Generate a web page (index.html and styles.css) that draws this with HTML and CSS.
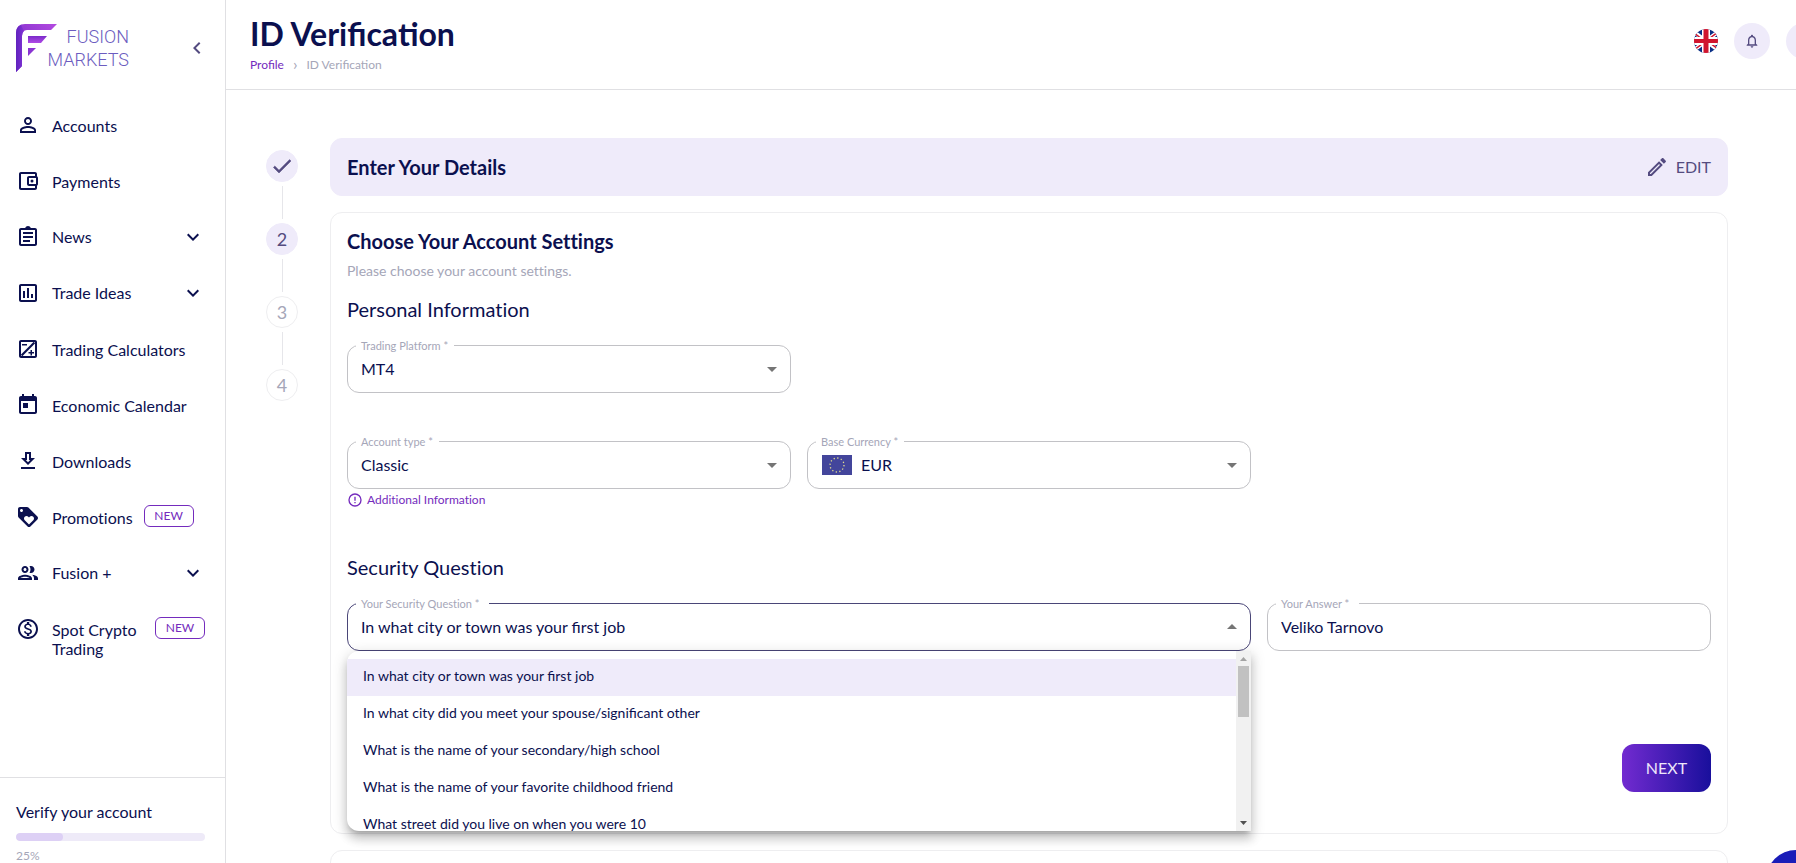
FILE: index.html
```html
<!DOCTYPE html>
<html lang="en">
<head>
<meta charset="utf-8">
<title>ID Verification</title>
<link rel="stylesheet" href="styles.css">
</head>
<body>
<div class="app">
  <aside class="sidebar">
    <div class="brand">
      <svg class="logo" width="114" height="48" viewBox="0 0 114 48" role="img" aria-label="Fusion Markets">
        <defs>
          <linearGradient id="lg" x1="0" y1="1" x2="1" y2="0"><stop offset="0" stop-color="#6a25c4"/><stop offset="1" stop-color="#b44ae0"/></linearGradient>
          <linearGradient id="lv" x1="0" y1="0" x2="1" y2="0"><stop offset="0" stop-color="#5f22bd"/><stop offset="1" stop-color="#8334d6"/></linearGradient>
          <linearGradient id="lh" x1="0" y1="0" x2="0" y2="1"><stop offset="0" stop-color="#7a2bc9"/><stop offset="1" stop-color="#b04ae6"/></linearGradient>
        </defs>
        <path fill="url(#lg)" d="M0 9Q0 0 9 0H41L35 6H11Q6 6 6 12V42L0 48Z"/>
        <path fill="url(#lv)" d="M0 9Q0 3 5 1L8 7Q6 9 6 12V42L0 48Z"/>
        <path fill="url(#lh)" d="M12 12H31L25 19H12Z"/>
        <path fill="#8a35d2" d="M12 24H20L12 32Z"/>
        <text class="logo-text" x="113" y="19" text-anchor="end">FUSION</text>
        <text class="logo-text" x="113" y="42" text-anchor="end">MARKETS</text>
      </svg>
      <button class="collapse" aria-label="Collapse menu"><svg class="icon" viewBox="0 0 24 24"><path d="M15.41 7.41 14 6l-6 6 6 6 1.41-1.41L10.83 12z"/></svg></button>
    </div>
    <nav class="nav">
      <a class="item" href="#"><svg class="icon" viewBox="0 0 24 24"><path d="M12 5.9c1.16 0 2.1.94 2.1 2.1s-.94 2.1-2.1 2.1S9.9 9.16 9.9 8s.94-2.1 2.1-2.1m0 9c2.97 0 6.1 1.46 6.1 2.1v1.1H5.9V17c0-.64 3.13-2.1 6.1-2.1M12 4C9.79 4 8 5.79 8 8s1.79 4 4 4 4-1.79 4-4-1.79-4-4-4m0 9c-2.67 0-8 1.34-8 4v3h16v-3c0-2.66-5.33-4-8-4"/></svg><span class="text">Accounts</span></a>
      <a class="item" href="#"><svg class="icon" viewBox="0 0 24 24"><path d="M21 7.28V5c0-1.1-.9-2-2-2H5c-1.11 0-2 .9-2 2v14c0 1.1.89 2 2 2h14c1.1 0 2-.9 2-2v-2.28c.59-.35 1-.98 1-1.72V9c0-.74-.41-1.37-1-1.72M20 9v6h-7V9zM5 19V5h14v2h-6c-1.1 0-2 .9-2 2v6c0 1.1.9 2 2 2h6v2z"/><circle cx="16" cy="12" r="1.5"/></svg><span class="text">Payments</span></a>
      <a class="item expandable" href="#"><svg class="icon" viewBox="0 0 24 24"><path d="M7 15h7v2H7zm0-4h10v2H7zm0-4h10v2H7z"/><path fill-rule="evenodd" d="M19 3h-4.18C14.4 1.84 13.3 1 12 1s-2.4.84-2.82 2H5c-1.1 0-2 .9-2 2v14c0 1.1.9 2 2 2h14c1.1 0 2-.9 2-2V5c0-1.1-.9-2-2-2zm0 16H5V5h14z"/></svg><span class="text">News</span><svg class="icon" viewBox="0 0 24 24"><path d="M16.59 8.59 12 13.17 7.41 8.59 6 10l6 6 6-6z"/></svg></a>
      <a class="item expandable" href="#"><svg class="icon" viewBox="0 0 24 24"><path fill-rule="evenodd" d="M9 17H7v-7h2zm4 0h-2V7h2zm4 0h-2v-4h2zm2 2H5V5h14zm0-16H5c-1.1 0-2 .9-2 2v14c0 1.1.9 2 2 2h14c1.1 0 2-.9 2-2V5c0-1.1-.9-2-2-2z"/></svg><span class="text">Trade Ideas</span><svg class="icon" viewBox="0 0 24 24"><path d="M16.59 8.59 12 13.17 7.41 8.59 6 10l6 6 6-6z"/></svg></a>
      <a class="item" href="#"><svg class="icon" viewBox="0 0 24 24"><path fill-rule="evenodd" d="M19 3H5c-1.1 0-2 .9-2 2v14c0 1.1.9 2 2 2h14c1.1 0 2-.9 2-2V5c0-1.1-.9-2-2-2zm0 2v14H5V5z"/><path d="M17.700 4.800 19.200 6.300 6.300 19.200 4.800 17.700z"/><path d="M6 7h5v1.500H6zM14.500 13H16v2h2v1.500h-2v2h-1.500v-2h-2V15h2z"/></svg><span class="text">Trading Calculators</span></a>
      <a class="item" href="#"><svg class="icon" viewBox="0 0 24 24"><path fill-rule="evenodd" d="M19 3h-1V1h-2v2H8V1H6v2H5c-1.11 0-1.99.9-1.99 2L3 19c0 1.1.89 2 2 2h14c1.1 0 2-.9 2-2V5c0-1.1-.9-2-2-2zm0 16H5V8h14z"/><path d="M7 10h5v5H7z"/></svg><span class="text">Economic Calendar</span></a>
      <a class="item" href="#"><svg class="icon" viewBox="0 0 24 24"><path fill-rule="evenodd" d="M19 9h-4V3H9v6H5l7 7zm-8 2V5h2v6h1.170L12 13.170 9.830 11zm-6 7h14v2H5z"/></svg><span class="text">Downloads</span></a>
      <a class="item" href="#"><svg class="icon" viewBox="0 0 24 24"><path fill-rule="evenodd" d="M21.41 11.58l-9-9C12.05 2.22 11.55 2 11 2H4c-1.1 0-2 .9-2 2v7c0 .55.22 1.05.59 1.42l9 9c.36.36.86.58 1.41.58s1.05-.22 1.41-.59l7-7c.37-.36.59-.86.59-1.41s-.23-1.060-.59-1.420zM5.500 7C4.670 7 4 6.330 4 5.500S4.670 4 5.500 4 7 4.670 7 5.500 6.330 7 5.500 7zm11.770 8.270L13 19.540l-4.270-4.270C8.280 14.810 8 14.190 8 13.500c0-1.380 1.120-2.500 2.500-2.500.69 0 1.320.28 1.770.74l.73.72.73-.73c.45-.45 1.080-.73 1.770-.73 1.380 0 2.500 1.120 2.500 2.500 0 .69-.28 1.320-.73 1.770z"/></svg><span class="text tight">Promotions</span><span class="badge">NEW</span></a>
      <a class="item expandable" href="#"><svg class="icon" viewBox="0 0 24 24"><path d="M9 13.750c-2.340 0-7 1.170-7 3.500V19h14v-1.750c0-2.330-4.660-3.500-7-3.500zM4.340 17c.84-.58 2.870-1.250 4.660-1.250s3.820.67 4.660 1.250zM9 12c1.930 0 3.500-1.570 3.500-3.500S10.930 5 9 5 5.500 6.570 5.500 8.500 7.070 12 9 12zm0-5c.83 0 1.500.67 1.500 1.500S9.830 10 9 10s-1.500-.67-1.500-1.500S8.170 7 9 7zm7.040 6.810c1.160.84 1.960 1.960 1.960 3.440V19h4v-1.750c0-2.020-3.500-3.170-5.960-3.440zM15 12c1.930 0 3.500-1.570 3.500-3.500S16.930 5 15 5c-.54 0-1.040.13-1.500.35.63.89 1 1.980 1 3.150s-.37 2.260-1 3.150c.46.22.96.35 1.500.35z" fill-rule="evenodd"/></svg><span class="text">Fusion +</span><svg class="icon" viewBox="0 0 24 24"><path d="M16.59 8.59 12 13.17 7.41 8.59 6 10l6 6 6-6z"/></svg></a>
      <a class="item" href="#"><svg class="icon" viewBox="0 0 24 24"><path fill-rule="evenodd" d="M12 2C6.480 2 2 6.480 2 12s4.480 10 10 10 10-4.480 10-10S17.520 2 12 2zm0 18c-4.410 0-8-3.590-8-8s3.590-8 8-8 8 3.590 8 8-3.590 8-8 8zm.31-8.860c-1.770-.45-2.340-.94-2.340-1.670 0-.84.79-1.430 2.100-1.430 1.380 0 1.900.66 1.940 1.640h1.710c-.05-1.340-.87-2.570-2.490-2.970V5H10.900v1.690c-1.510.32-2.720 1.300-2.720 2.810 0 1.790 1.490 2.690 3.660 3.210 1.950.46 2.340 1.150 2.340 1.870 0 .53-.39 1.390-2.100 1.390-1.600 0-2.230-.72-2.320-1.640H8.040c.1 1.700 1.360 2.660 2.860 2.970V19h2.340v-1.670c1.520-.29 2.720-1.160 2.730-2.770-.01-2.200-1.900-2.960-3.660-3.420z"/></svg><span class="text">Spot Crypto Trading</span><span class="badge">NEW</span></a>
    </nav>
    <section class="verify">
      <label class="verify-title" for="progress">Verify your account</label>
      <progress id="progress" class="bar" value="25" max="100"></progress>
      <span class="percent">25%</span>
    </section>
  </aside>

  <div class="page">
    <header class="header">
      <div class="heading">
        <h1>ID Verification</h1>
        <nav class="crumbs" aria-label="Breadcrumb"><a href="#">Profile</a><span class="sep">›</span><span>ID Verification</span></nav>
      </div>
      <div class="actions">
        <button class="flag" aria-label="Language: English">
          <svg width="24" height="24" viewBox="0 0 24 24">
            <clipPath id="round"><circle cx="12" cy="12" r="12"/></clipPath>
            <g clip-path="url(#round)">
              <path fill="#0a2f86" d="M0 0h24v24H0z"/>
              <path stroke="#fff" stroke-width="4" d="M-4 0 28 24M28 0-4 24"/>
              <path stroke="#d0152f" stroke-width="1.500" d="M-4 1 10 11.500M28 0 14 10.500M-4 24 10 13.500M28 23 14 12.500"/>
              <path fill="#fff" d="M8 0h8v24H8zM0 8h24v8H0z"/>
              <path fill="#d0152f" d="M9.500 0h5v24h-5zM0 10h24v4H0z"/>
            </g>
          </svg>
        </button>
        <button class="round" aria-label="Notifications"><svg class="icon small" viewBox="0 0 24 24"><path fill-rule="evenodd" d="M12 22c1.100 0 2-.9 2-2h-4c0 1.100.9 2 2 2zm6-6v-5c0-3.070-1.630-5.640-4.500-6.320V4c0-.83-.67-1.500-1.500-1.500s-1.500.67-1.500 1.500v.68C7.640 5.360 6 7.920 6 11v5l-2 2v1h16v-1zm-2 1H8v-6c0-2.480 1.510-4.500 4-4.500s4 2.020 4 4.500z"/></svg></button>
        <button class="round" aria-label="Profile"></button>
      </div>
    </header>

    <main class="main">
      <ol class="steps">
        <li class="step active"><svg class="icon" viewBox="0 0 24 24" role="img" aria-label="Completed"><path d="M9 16.170 4.830 12l-1.420 1.410L9 19 21 7l-1.410-1.410z"/></svg></li>
        <li class="line"></li>
        <li class="step active">2</li>
        <li class="line"></li>
        <li class="step">3</li>
        <li class="line"></li>
        <li class="step">4</li>
      </ol>

      <div class="cards">
        <section class="card done">
          <h2>Enter Your Details</h2>
          <button class="edit"><svg class="icon" viewBox="0 0 24 24"><path fill-rule="evenodd" d="M14.060 9.020l.92.92L5.920 19H5v-.92zM17.660 3c-.25 0-.51.1-.7.29l-1.830 1.830 3.750 3.750 1.830-1.830c.39-.39.39-1.020 0-1.410l-2.340-2.340c-.2-.2-.45-.29-.71-.29zm-3.600 3.190L3 17.250V21h3.750L17.810 9.940z"/></svg>EDIT</button>
        </section>

        <form class="card form">
          <h2>Choose Your Account Settings</h2>
          <p class="hint">Please choose your account settings.</p>
          <h3>Personal Information</h3>
          <div class="grid">
            <div class="field">
              <label for="platform">Trading Platform *</label>
              <select id="platform"><option>MT4</option></select>
              <svg class="arrow" viewBox="0 0 24 24"><path d="m7 10 5 5 5-5z"/></svg>
            </div>
          </div>
          <div class="grid second">
            <div class="cell">
              <div class="field">
                <label for="type">Account type *</label>
                <select id="type"><option>Classic</option></select>
                <svg class="arrow" viewBox="0 0 24 24"><path d="m7 10 5 5 5-5z"/></svg>
              </div>
              <a class="info" href="#"><svg class="icon small" viewBox="0 0 24 24"><path d="M11 15h2v2h-2zm0-8h2v6h-2z"/><circle class="ring" cx="12" cy="12" r="9"/></svg>Additional Information</a>
            </div>
            <div class="field currency">
              <label for="currency">Base Currency *</label>
              <svg class="eu" width="30" height="20" viewBox="0 0 30 20" aria-hidden="true"><path fill="#43459b" d="M0 0h30v20H0z"/><circle class="stars" cx="15" cy="10" r="7"/></svg>
              <select id="currency"><option>EUR</option></select>
              <svg class="arrow" viewBox="0 0 24 24"><path d="m7 10 5 5 5-5z"/></svg>
            </div>
          </div>
          <h3>Security Question</h3>
          <div class="grid">
            <div class="field wide open">
              <label for="question">Your Security Question *</label>
              <select id="question"><option>In what city or town was your first job</option></select>
              <svg class="arrow" viewBox="0 0 24 24"><path d="m7 14 5-5 5 5z"/></svg>
              <div class="menu">
                <ul class="options" role="listbox" aria-label="Your Security Question">
                  <li role="option" aria-selected="true">In what city or town was your first job</li>
                  <li role="option">In what city did you meet your spouse/significant other</li>
                  <li role="option">What is the name of your secondary/high school</li>
                  <li role="option">What is the name of your favorite childhood friend</li>
                  <li role="option">What street did you live on when you were 10</li>
                </ul>
                <div class="scroll" aria-hidden="true">
                  <svg width="7" height="4" viewBox="0 0 7 4"><path fill="#a3a3a3" d="M0 4 3.500 0 7 4z"/></svg>
                  <span class="thumb"></span>
                  <svg class="down" width="7" height="4" viewBox="0 0 7 4"><path fill="#505050" d="M0 0h7L3.500 4z"/></svg>
                </div>
              </div>
            </div>
            <div class="field">
              <label class="roomy" for="answer">Your Answer *</label>
              <input id="answer" type="text" value="Veliko Tarnovo">
            </div>
          </div>
          <button class="next" type="button">NEXT</button>
        </form>

        <section class="card upcoming"></section>
      </div>
    </main>
  </div>
  <button class="chat" aria-label="Open chat"></button>
</div>
</body>
</html>
```

FILE: styles.css
```css
:root {
  --ink: #0b104f;
  --soft-ink: #544b80;
  --muted: #a5a6b8;
  --purple: #742bbd;
  --lilac: #efebfa;
  --line: #e0e0e3;
  --card-line: #eeeef0;
}

* { box-sizing: border-box; }

body {
  margin: 0;
  background: #fff;
  color: var(--ink);
  font: 16px/24px Lato, "Noto Sans", sans-serif;
  font-variant-ligatures: none;
}

h1, h2, h3, p, ol, ul { margin: 0; padding: 0; list-style: none; }
a { color: inherit; text-decoration: none; }
button { border: 0; padding: 0; background: none; color: inherit; font: inherit; cursor: pointer; }

.icon { flex: none; width: 24px; height: 24px; fill: currentColor; }
.icon.small { width: 16px; height: 16px; }

.app { display: flex; height: 100vh; overflow: hidden; }

/* Sidebar */
.sidebar {
  display: flex;
  flex: none;
  flex-direction: column;
  width: 226px;
  border-right: 1px solid var(--line);
}
.brand {
  display: flex;
  align-items: center;
  justify-content: space-between;
  height: 96px;
  padding: 0 16px;
}
.logo-text { fill: #6c5cc0; font: 300 18px Roboto, sans-serif; }
.collapse { display: flex; color: var(--soft-ink); }

.nav { flex: 1; padding: 2px 20px 0 16px; }
.item { display: flex; align-items: flex-start; height: 56px; padding-top: 15px; }
.item .text { flex: 1; padding: 3px 0 0 12px; line-height: 19px; }
.item.expandable .text { padding-top: 2px; }
.item .text.tight { flex: none; padding-right: 11px; }
.badge {
  width: 50px;
  height: 22px;
  border: 1px solid var(--purple);
  border-radius: 6px;
  color: var(--purple);
  font-size: 12px;
  line-height: 20px;
  text-align: center;
}

.verify {
  display: flex;
  flex-direction: column;
  height: 86px;
  padding: 22px 20px 0 16px;
  border-top: 1px solid var(--line);
}
.bar {
  appearance: none;
  width: 100%;
  height: 8px;
  margin: 9px 0 8px;
  border: 0;
  border-radius: 4px;
  overflow: hidden;
  background: #eeeaf8;
}
.bar::-webkit-progress-bar { background: #eeeaf8; }
.bar::-webkit-progress-value { border-radius: 4px; background: #ddd0f5; }
.percent { color: var(--muted); font-size: 12px; line-height: 14px; }

/* Header */
.page { flex: 1; min-width: 0; }
.header {
  display: flex;
  justify-content: space-between;
  height: 90px;
  padding: 14px 0 0 24px;
  border-bottom: 1px solid var(--line);
}
h1 { font-size: 32px; line-height: 40px; }
.heading, .options, .field.open select { font-variant-ligatures: normal; }
.crumbs { display: flex; gap: 9px; color: var(--muted); font-size: 12px; line-height: 22px; }
.crumbs a { color: var(--purple); }
.crumbs .sep { font-size: 16px; line-height: 20px; }
.actions { display: flex; align-items: center; gap: 16px; height: 54px; margin-right: -26px; }
.flag { display: flex; }
.round {
  display: flex;
  align-items: center;
  justify-content: center;
  width: 36px;
  height: 36px;
  border-radius: 50%;
  background: var(--lilac);
  color: var(--soft-ink);
}

/* Stepper */
.main { display: flex; gap: 32px; padding: 48px 68px 0 40px; }
.steps { display: flex; flex: none; flex-direction: column; align-items: center; padding-top: 12px; }
.step {
  display: flex;
  align-items: center;
  justify-content: center;
  width: 32px;
  height: 32px;
  border: 1px solid var(--card-line);
  border-radius: 50%;
  color: var(--muted);
  font-size: 18px;
}
.step.active { border-color: var(--lilac); background: var(--lilac); color: var(--soft-ink); }
.step .icon { stroke: currentColor; stroke-width: 0.5; }
.line { width: 1px; height: 33px; margin: 4px 0; background: #e6e6ea; }

/* Cards */
.cards { display: flex; flex: 1; flex-direction: column; gap: 16px; min-width: 0; }
.card { border: 1px solid var(--card-line); border-radius: 12px; padding: 16px; }
.card.done {
  display: flex;
  align-items: center;
  justify-content: space-between;
  border-color: var(--lilac);
  background: var(--lilac);
}
h2 { font-size: 20px; line-height: 24px; }
h3 { margin-bottom: 22px; font-size: 20px; font-weight: 400; line-height: 28px; }
.edit { display: flex; align-items: center; gap: 7px; color: var(--soft-ink); }
.form { padding-bottom: 41px; }
.hint { margin: 6px 0 12px; color: var(--muted); font-size: 14px; }
.upcoming { height: 58px; }

.grid { display: grid; grid-template-columns: repeat(3, 1fr); gap: 16px; }
.grid.second { align-items: start; margin: 48px 0 44px; }
.wide { grid-column: span 2; }

.field {
  position: relative;
  display: flex;
  align-items: center;
  height: 48px;
  border: 1px solid #c2c2c6;
  border-radius: 12px;
}
.field label {
  position: absolute;
  top: -8px;
  left: 8px;
  padding: 0 6px 0 5px;
  background: #fff;
  color: var(--muted);
  font-size: 11px;
  line-height: 16px;
}
.field select,
.field input {
  appearance: none;
  flex: 1;
  min-width: 0;
  height: 46px;
  padding: 0 40px 0 13px;
  border: 0;
  border-radius: 12px;
  outline: 0;
  background: none;
  color: inherit;
  font: inherit;
}
.field input { padding-bottom: 2px; }
.arrow { position: absolute; right: 6px; width: 24px; height: 24px; fill: #757575; pointer-events: none; }
.field.open { border-color: #4a4678; }
.field.open label, .field label.roomy { padding-right: 10px; }
.eu { flex: none; margin-left: 14px; }
.stars { fill: none; stroke: #e0dc90; stroke-width: 1.3; stroke-dasharray: 1.3 2.365; }
.field.currency select { padding-left: 9px; }

.info { display: flex; align-items: center; gap: 4px; padding-top: 2px; color: var(--purple); font-size: 12px; line-height: 18px; }
.ring { fill: none; stroke: currentColor; stroke-width: 2; }

/* Open list of questions */
.menu {
  position: absolute;
  z-index: 1;
  top: 47px;
  left: -1px;
  right: -1px;
  display: flex;
  height: 180px;
  overflow: hidden;
  border-radius: 12px 0 0 12px;
  background: #fff;
  box-shadow: 0 5px 5px -3px rgba(0, 0, 0, .2), 0 8px 10px 1px rgba(0, 0, 0, .14), 0 3px 14px 2px rgba(0, 0, 0, .12);
}
.options { flex: 1; padding-top: 8px; }
.options li { padding: 9px 16px 12px; font-size: 14px; line-height: 16px; }
.options li[aria-selected="true"] { background: var(--lilac); }
.scroll { display: flex; flex-direction: column; align-items: center; width: 15px; padding: 6px 0; background: #f1f1f1; }
.thumb { width: 11px; height: 51px; margin-top: 5px; background: #c1c1c1; }
.down { margin-top: auto; }

.next {
  display: block;
  width: 89px;
  height: 48px;
  margin: 93px 0 0 auto;
  border-radius: 12px;
  background: linear-gradient(90deg, #722bd0, #190f9c);
  color: #eee6fa;
}

.chat {
  position: fixed;
  right: -30px;
  bottom: -47px;
  width: 60px;
  height: 60px;
  border-radius: 50%;
  background: #1a1cb8;
}
```
